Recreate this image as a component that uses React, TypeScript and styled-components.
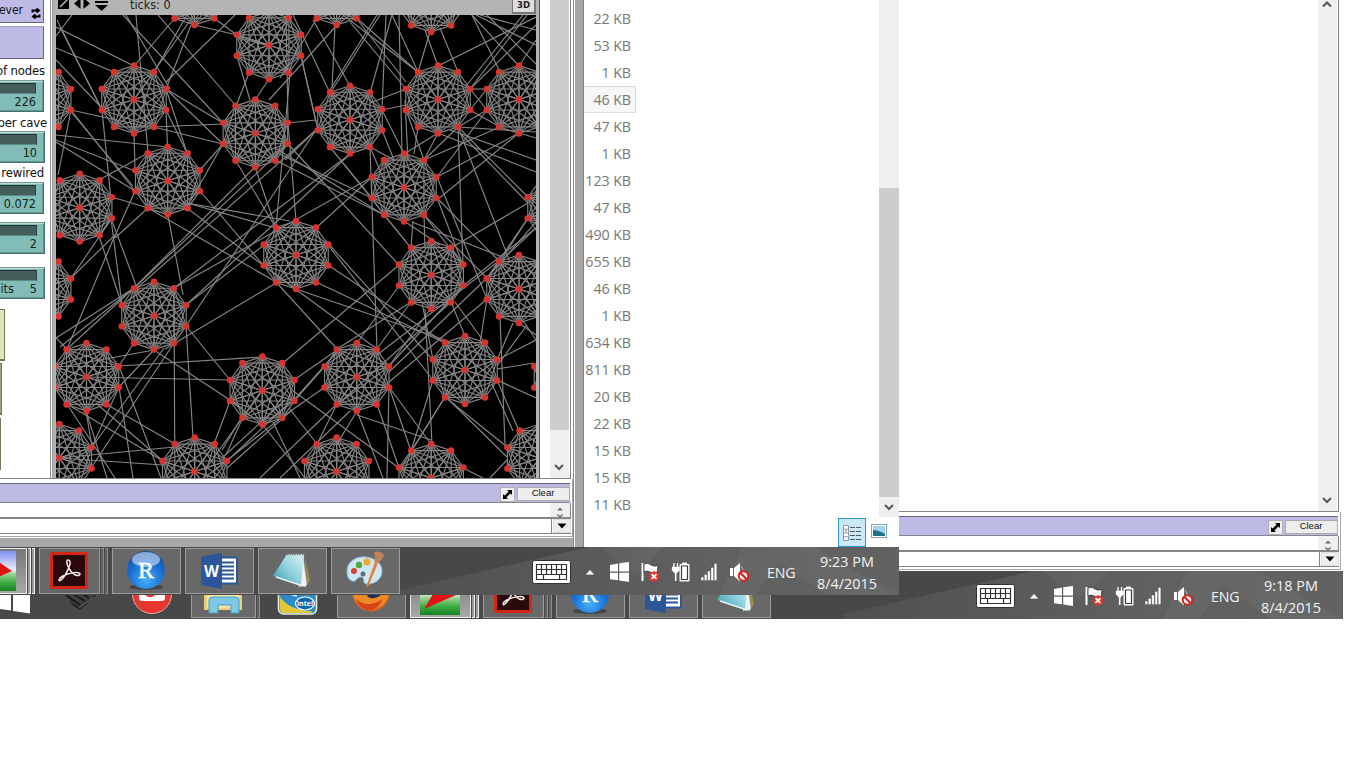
import React from "react";
import styled, { createGlobalStyle, css } from "styled-components";

const GlobalStyle = createGlobalStyle`
  *, *::before, *::after { box-sizing: border-box; }
  body { margin: 0; background: #fff; overflow: hidden; }
`;

const UI = `"Open Sans", "Noto Sans", sans-serif`;
const TAHOMA = `"DejaVu Sans Condensed", "DejaVu Sans", sans-serif`;

/* ---------- screens ---------- */

const Page = styled.main`
  position: relative;
  width: 1360px;
  height: 768px;
  background: #fff;
  overflow: hidden;
`;

const Screen = styled.section<{ $w: number; $h: number; $front?: boolean }>`
  display: flex;
  flex-direction: column;
  width: ${(p) => p.$w}px;
  height: ${(p) => p.$h}px;
  overflow: hidden;
  background: #fff;
  ${(p) =>
    p.$front &&
    css`
      position: absolute;
      left: 0;
      top: 0;
    `}
`;

const Row = styled.div`
  display: flex;
  flex: 1;
  min-height: 0;
`;

/* ---------- model window ---------- */

const ModelWindow = styled.div<{ $w: number }>`
  display: flex;
  flex-direction: column;
  flex: none;
  width: ${(p) => p.$w}px;
  background: #fff;
`;

const WorkArea = styled.div<{ $h: number }>`
  display: flex;
  height: ${(p) => p.$h}px;
  flex: none;
  border-bottom: 1px solid #85858b;
  border-right: 1px solid #85858b;
  margin-right: 2px;
  padding-right: 1px;
`;

const FrameEdge = styled.div`
  display: flex;
  flex: none;
  border-right: 1px solid #a5a5a5;
  flex-direction: column;
`;

const Spacer = styled.div`
  flex: 1;
`;

const Track = styled.div<{ $w: number }>`
  display: flex;
  flex-direction: column;
  flex: none;
  width: ${(p) => p.$w}px;
  background: #efefef;
`;

const Thumb = styled.div<{ $top: number; $h: number }>`
  margin-top: ${(p) => p.$top}px;
  height: ${(p) => p.$h}px;
  background: #cdcdcd;
`;

const ArrowSlot = styled.div<{ $h: number }>`
  display: flex;
  align-items: center;
  justify-content: center;
  height: ${(p) => p.$h}px;
  padding-right: 1px;
`;

const Chevron = ({ up }: { up?: boolean }) => (
  <svg width="10" height="7" viewBox="0 0 10 7">
    <path d={up ? "M1 5.500L5 1.500L9 5.500" : "M1 1L5 5L9 1"} fill="none" stroke="#555" strokeWidth="2" />
  </svg>
);

const CommandHead = styled.div`
  display: flex;
  justify-content: flex-end;
  align-items: flex-start;
  gap: 2px;
  height: 20px;
  margin: 4px 2px 0 0;
  padding-top: 3px;
  border-top: 1px solid #66667a;
  border-bottom: 1px solid #85858b;
  background: #bdbbe6;
`;

const ExpandButton = styled.div`
  display: flex;
  align-items: center;
  justify-content: center;
  width: 15px;
  height: 15px;
  background: #eee;
  border: 1px solid #b0b0b8;
`;

const ClearButton = styled.div`
  width: 53px;
  height: 14px;
  background: #eee;
  border: 1px solid #aaa;
  font: 9.5px/10px "Liberation Sans", sans-serif;
  color: #111;
  text-align: center;
  padding-right: 1px;
`;

const OutputLine = styled.div`
  display: flex;
  justify-content: flex-end;
  margin-right: 1px;
  border-bottom: 2px solid #85858b;
  border-right: 1px solid #85858b;
  height: 16px;
`;

const MiniScroll = styled.div`
  width: 20px;
  background: #efefef;
  overflow: hidden;
  padding: 4px 0 0 6px;
  line-height: 0;
`;

const InputLine = styled.div`
  display: flex;
  height: 15px;
  margin-right: 1px;
  border-bottom: 1px solid #85858b;
`;

const InputField = styled.div`
  flex: 1;
  border-right: 1px solid #85858b;
`;

const DropButton = styled.div`
  display: flex;
  align-items: center;
  justify-content: center;
  width: 18px;
  margin-left: 1px;
  background: #eee;
  border: 1px solid #ddd;
`;

const FootLine = styled.div`
  height: 3px;
  border-bottom: 1px solid #a5a5a5;
`;

const CommandCenter = () => (
  <FrameEdge>
    <CommandHead>
      <ExpandButton>
        <svg width="11" height="11" viewBox="0 0 11 11">
          <path d="M5 1H10V6L8.4 4.4L4.4 8.4L6 10H1V5L2.6 6.6L6.6 2.6Z" />
        </svg>
      </ExpandButton>
      <ClearButton>Clear</ClearButton>
    </CommandHead>
    <OutputLine>
      <MiniScroll>
        <svg width="8" height="12" viewBox="0 0 8 12">
          <path d="M1 3.500L4 0.500L7 3.500ZM0.500 7.500H2.500L4 9L5.500 7.500H7.500L4 11Z" fill="#666" />
        </svg>
      </MiniScroll>
    </OutputLine>
    <InputLine>
      <InputField />
      <DropButton>
        <svg width="10" height="6" viewBox="0 0 10 6">
          <path d="M0.5 0.5H9.5L5 5.5Z" />
        </svg>
      </DropButton>
    </InputLine>
    <FootLine />
  </FrameEdge>
);

/* ---------- controls on the left ---------- */

const Controls = styled.div`
  display: flex;
  flex-direction: column;
  align-items: flex-start;
  width: 54px;
  flex: none;
  overflow: hidden;
  border-right: 1px solid #b0b0b0;
  background: linear-gradient(#888, #888) 50px 0 / 1px 100% no-repeat,
    linear-gradient(#999, #999) 52px 0 / 1px 100% no-repeat, #fff;
`;

const PurpleButton = styled.div<{ $h: number; $mt?: number }>`
  display: flex;
  align-items: center;
  justify-content: flex-end;
  gap: 8px;
  width: 44px;
  height: ${(p) => p.$h}px;
  margin-top: ${(p) => p.$mt || 0}px;
  padding: 0 2px 3px 0;
  background: #bdbbe6;
  border: solid #66667a;
  border-width: 0 1px 1px 0;
  border-top: ${(p) => (p.$mt ? "1px solid #a3a2c0" : "0")};
  font: 12px ${TAHOMA};
  color: #111;
  white-space: nowrap;
`;

const LoopIcon = styled.svg`
  position: relative;
  top: 4px;
  flex: none;
`;

const Caption = styled.div<{ $w: number; $mt: number }>`
  display: flex;
  justify-content: flex-end;
  width: ${(p) => p.$w}px;
  height: 14px;
  margin-top: ${(p) => p.$mt}px;
  font: 11.7px/14px "DejaVu Sans", sans-serif;
  letter-spacing: -0.15px;
  color: #111;
  white-space: nowrap;
`;

const SliderBox = styled.div<{ $mt: number; $w?: number }>`
  width: ${(p) => p.$w || 44}px;
  height: 32px;
  margin-top: ${(p) => p.$mt}px;
  background: #82bcb6;
  border: solid #44716d;
  border-width: 0 1px 1px 0;
  box-shadow: inset 0 1px #7a9a98, inset 0 2px #b9dcd8, inset -1px -1px #63958f;
  padding: 3px 0 0;
`;

const Groove = styled.div`
  width: calc(100% - 7px);
  height: 11px;
  background: #435d5a;
  border-top: 1px solid #1f302e;
  border-right: 1px solid #2c4340;
  border-bottom: 1px solid #5c8b86;
`;

const SliderValue = styled.div`
  display: flex;
  justify-content: flex-end;
  gap: 16px;
  padding-right: 7px;
  margin-top: 1px;
  font: 12.5px/14px ${TAHOMA};
  color: #142421;
  white-space: nowrap;
`;

const Monitor = styled.div<{ $w: number; $mt: number; $c: string }>`
  width: ${(p) => p.$w}px;
  height: 52px;
  margin-top: ${(p) => p.$mt}px;
  background: ${(p) => p.$c};
  border: solid #76765c;
  border-width: 1px 1px 2px 0;
`;

const Slider = ({ mt, w, value, tail }: { mt: number; w?: number; value: string; tail?: string }) => (
  <SliderBox $mt={mt} $w={w}>
    <Groove />
    <SliderValue>
      {tail && <span>{tail}</span>}
      <span>{value}</span>
    </SliderValue>
  </SliderBox>
);

/* ---------- network view ---------- */

const ViewColumn = styled.div`
  display: flex;
  flex-direction: column;
  width: 486px;
  flex: none;
  background: #b4b4b4;
  border-right: 1px solid #555;
`;

const ViewBar = styled.div`
  display: flex;
  height: 15px;
  flex: none;
  padding-left: 4px;
`;

const BarIcons = styled.svg`
  flex: none;
`;

const Ticks = styled.div`
  width: 382px;
  margin-left: 21px;
  margin-top: -3px;
  font: 12.5px/15px ${TAHOMA};
  color: #222;
`;

const ThreeD = styled.div`
  width: 24px;
  height: 14px;
  background: #ddd;
  border: solid #777;
  border-width: 0 2px 2px 1px;
  font: bold 9.5px/10px ${TAHOMA};
  text-align: center;
  color: #222;
`;

const Network = styled.svg`
  display: block;
  margin-left: 2px;
  background: #000;
`;

const caves: [number, number][] = [
  [134, 99.5], [255.4, 133.3], [269, 45.3], [167.7, 180.7], [79.7, 207.7], [38.7, 99.5],
  [194.5, -9], [350, 119.7], [438, 99.5], [519, 99.5], [404, 187.5], [336.7, -9], [431.2, -2],
  [560, 207.8], [296, 255], [431.2, 275], [519, 289], [154, 315.7], [86.5, 377], [262.3, 390.5],
  [38.7, 289], [59.3, 458], [194.7, 471.5], [336.7, 471.5], [356.8, 377], [465, 370],
  [431.2, 478], [539.6, 458], [566.5, 377],
];

const links: number[][] = [
  [56, 27, 134, 66], [56, 48, 114, 72], [72, 15, 56, 36], [57, 20, 102, 110], [60, 27, 102, 110],
  [56, 60, 100, 106], [123, 15, 223, 123], [126, 15, 170, 89], [136, 15, 148, 153], [158, 15, 236, 106],
  [175, 18, 134, 66], [194, 15, 153.5, 72], [187, 15, 154, 72], [191, 25, 166, 89], [194.7, 25, 237, 35],
  [237, 35, 269, 45], [237, 37, 269, 46], [214.5, 18.5, 237, 35], [166, 89, 223, 123], [166, 89, 223, 144],
  [166, 110, 167.5, 147], [153.5, 127, 223, 124], [153.5, 127, 223, 144], [166, 110, 187, 153],
  [166, 89, 187, 153], [134, 133, 135, 170], [235, 15, 166, 82], [237, 56, 250, 100], [249, 73, 236, 106],
  [269, 79, 255, 100], [71, 110, 148, 127], [71, 110, 135, 191], [72, 113, 133, 186], [71, 110, 58, 175],
  [56, 135, 168, 147], [56, 140, 135, 171], [56, 142, 135, 191], [102, 110, 111, 200], [99, 180, 148, 153],
  [112, 197, 148, 208], [114, 238, 135, 191], [115, 238, 148, 208], [200, 191, 264, 266],
  [187, 203, 276, 228], [187, 203, 290, 221], [167.7, 214, 183, 295], [187, 208, 264, 266],
  [148, 208, 276, 282], [223, 144, 187, 207], [223, 144, 200, 170], [236, 161, 276, 228],
  [255, 167, 276, 228], [255, 167, 134, 288], [288, 144, 134, 288], [290, 73, 276, 228],
  [286, 15, 288, 123], [316, 130, 186, 326], [316, 130, 137, 288], [350, 154, 174, 288],
  [350, 154, 186, 305], [372, 177, 174, 288], [288, 123, 296, 221],
  [293, 15, 330, 93], [313, 20, 350, 86], [335, 25, 332, 88], [317, 18.5, 280, 78], [337, 25, 269, 100],
  [380, 15, 331, 92], [377, 15, 330, 90], [386, 15, 382, 109], [392, 15, 370, 93], [392, 15, 418, 72],
  [399, 15, 402, 154], [343, 15, 418, 72], [357, 18.5, 418, 72], [350, 22, 406, 89], [356, 18, 406, 82],
  [430, 32, 418, 72], [425, 30, 438, 66], [440, 28, 458, 72], [536, 17, 438, 66], [527, 15, 470, 89],
  [523, 15, 466, 86], [536, 25, 470, 89], [472, 15, 519, 66], [476, 15, 536, 45], [487, 15, 536, 64],
  [472, 15, 500, 72], [480, 15, 536, 30], [536, 40, 519, 66], [382, 110, 406, 105], [370, 103, 406, 89],
  [382, 110, 404, 154], [382, 130, 394, 160], [301, 56, 316, 122], [301, 56, 318, 130],
  [288, 123, 316, 120], [285, 160, 316, 130], [275, 148, 384, 215], [275, 152, 372, 198],
  [275, 160, 384, 215], [288, 144, 399, 265], [330, 147, 372, 198], [330, 147, 411, 248],
  [370, 147, 373, 235], [370, 147, 394, 160], [370, 147, 384, 180], [316, 228, 372, 177],
  [418, 127, 414, 154], [405, 100, 408, 160], [406, 110, 424, 160], [438, 133, 424, 160],
  [438, 133, 404, 154], [458, 127, 424, 160], [458, 127, 536, 132], [458, 127, 463, 265],
  [458, 127, 528, 197], [460, 133, 528, 203], [438, 133, 536, 172], [450, 130, 536, 160],
  [487, 110, 437, 177], [500, 127, 424, 160], [519, 133, 437, 177], [519, 133, 437, 200],
  [487, 110, 458, 127], [470, 110, 500, 127], [470, 89, 487, 89], [470, 89, 487, 110],
  [470, 110, 487, 89], [519, 133, 536, 138], [458, 127, 510, 262], [437, 177, 487, 299],
  [437, 198, 463, 265], [424, 215, 487, 278], [424, 215, 463, 265], [437, 198, 500, 262],
  [528, 203, 451, 248], [528, 218, 487, 278], [528, 218, 500, 262], [404, 221, 440, 245],
  [413, 221, 411, 248], [424, 215, 425, 248], [412, 222, 500, 256], [384, 215, 411, 248],
  [111, 218, 99, 236], [99, 236, 122, 305], [111, 218, 122, 305], [111, 218, 137, 288],
  [115, 235, 71, 278], [112, 218, 71, 278], [115, 235, 67, 349], [264, 245, 186, 305],
  [276, 283, 165, 349], [134, 288, 56, 338], [134, 288, 60, 347], [134, 288, 67, 349],
  [56, 338, 67, 349], [174, 288, 174.7, 444], [186, 326, 193, 437], [186, 326, 230, 380],
  [154, 350, 67, 366], [154, 350, 242, 408], [119, 366, 262, 357], [86, 377, 230, 380],
  [119, 366, 134, 343], [119, 387, 154, 350], [174, 343, 91, 468], [164, 348, 92, 447],
  [119, 387, 133, 478], [119, 366, 161, 478], [106, 404, 175, 444], [97, 404, 163, 461],
  [67, 404, 163, 461], [67, 404, 115, 478], [86, 411, 107, 478], [59, 458, 175, 447],
  [59, 458, 163, 465], [119, 387, 92, 447], [86, 411, 92, 447], [230, 401, 214, 444],
  [242, 417, 222, 450], [243, 417, 226, 455], [262, 390, 205, 470], [290, 402, 227, 461],
  [285, 400, 222, 458], [282, 417, 215, 470], [292, 410, 227, 468], [273, 422, 300, 478],
  [262, 424, 305, 478], [328, 245, 433, 380], [326, 241, 433, 360], [328, 265, 445, 343],
  [316, 282, 445, 343], [296, 289, 445, 340], [276, 282, 337, 349], [264, 266, 377, 349],
  [373, 235, 377, 349], [399, 265, 283, 363], [399, 286, 357, 343], [411, 302, 337, 349],
  [411, 302, 377, 349], [431, 308, 389, 366], [451, 302, 337, 405], [463, 286, 389, 366],
  [487, 278, 389, 372], [487, 299, 389, 382], [500, 260, 377, 355], [422, 302, 433, 360],
  [425, 309, 432, 444], [451, 302, 465, 336], [455, 302, 485, 343], [536, 228, 500, 262],
  [536, 222, 487, 278], [536, 228, 463, 286], [500, 316, 505, 445], [513, 323, 497, 360],
  [524, 322, 536, 340], [519, 323, 536, 335], [536, 340, 497, 360], [527, 325, 497, 366],
  [487, 299, 480, 343], [497, 369, 534, 363], [497, 380, 536, 398], [497, 380, 519, 431],
  [492, 384, 513, 431], [445, 397, 507, 447], [449, 400, 507, 457], [445, 397, 411, 451],
  [445, 397, 403, 465], [433, 380, 411, 451], [389, 387, 431, 444], [389, 387, 387, 478],
  [389, 387, 411, 451], [377, 404, 399, 468], [357, 411, 383, 478], [357, 415, 431, 440],
  [337, 404, 317, 444], [357, 411, 337, 444], [337, 404, 260, 478], [350, 411, 280, 478],
  [294, 380, 337, 350], [294, 400, 337, 352], [294, 401, 325, 366], [282, 417, 325, 387],
  [292, 390, 399, 468], [289, 408, 317, 444], [463, 468, 483, 478], [507, 460, 490, 478],
];

const ring = ([cx, cy]: [number, number]) =>
  Array.from({ length: 10 }, (_, i) => {
    const a = (i * Math.PI) / 5;
    return [cx + 33.9 * Math.sin(a), cy - 33.9 * Math.cos(a)];
  });

const NetworkView = () => (
  <Network width="480" height="463" viewBox="56 15 480 463">
    <g stroke="#868686" strokeWidth="1.15">
      {links.map(([a, b, c, d], i) => (
        <line key={i} x1={a} y1={b} x2={c} y2={d} />
      ))}
      {caves.map((c, k) => {
        const pts = [c as number[], ...ring(c)];
        return pts.map((p, i) =>
          pts.slice(i + 1).map((q, j) => (
            <line key={`${k}-${i}-${j}`} x1={p[0]} y1={p[1]} x2={q[0]} y2={q[1]} />
          ))
        );
      })}
    </g>
    <g fill="#d5352e">
      {caves.map((c, k) =>
        [c as number[], ...ring(c)].map((p, i) => <circle key={`${k}-${i}`} cx={p[0]} cy={p[1]} r="3.25" />)
      )}
    </g>
  </Network>
);

/* ---------- file list ---------- */

const Divider = styled.div`
  width: 11px;
  flex: none;
  background: linear-gradient(90deg, #888 0 1px, #fff 1px 2px, #a6a6a6 2px 10px, #858585 10px);
`;

const Explorer = styled.div`
  display: flex;
  flex-direction: column;
  width: 315px;
  flex: none;
  background: #fff;
`;

const ListRow = styled.div`
  display: flex;
  justify-content: space-between;
  height: 517px;
  flex: none;
`;

const Sizes = styled.div`
  padding-top: 5px;
  width: 52px;
`;

const Size = styled.div<{ $on?: boolean }>`
  height: 27px;
  padding-right: 5px;
  text-align: right;
  font: 14.3px/28px ${UI};
  letter-spacing: -0.1px;
  color: #777;
  white-space: nowrap;
  box-shadow: ${(p) => (p.$on ? "inset -1px 0 #dcdcdc, inset 0 1px #dcdcdc, inset 0 -1px #dcdcdc" : "none")};
  background: ${(p) => (p.$on ? "#f7f7f7" : "transparent")};
`;

const ViewModes = styled.div`
  display: flex;
  align-items: center;
  gap: 5px;
  height: 30px;
  padding: 1px 0 0 254px;
`;

const ModeOn = styled.div`
  display: flex;
  align-items: center;
  justify-content: center;
  width: 28px;
  height: 29px;
  background: #cbe8f8;
  border: 1px solid #2f98cf;
`;

const PictureMode = styled.svg`
  margin-bottom: 3px;
`;

const sizes = [
  "22 KB", "53 KB", "1 KB", "46 KB", "47 KB", "1 KB", "123 KB", "47 KB", "490 KB", "655 KB",
  "46 KB", "1 KB", "634 KB", "811 KB", "20 KB", "22 KB", "15 KB", "15 KB", "11 KB",
];

/* ---------- taskbar ---------- */

const Taskbar = styled.div`
  position: relative;
  display: flex;
  justify-content: space-between;
  height: 48px;
  flex: none;
  overflow: hidden;
  background: #484848;
  &::before {
    content: "";
    position: absolute;
    right: 0;
    top: 0;
    width: 500px;
    height: 48px;
    background: linear-gradient(90deg, #505050, #606060 60%, #626262);
    clip-path: polygon(0 90%, 38% 0, 100% 0, 100% 100%, 0 100%);
  }
  &::after {
    content: "";
    position: absolute;
    right: 0;
    top: 0;
    width: 300px;
    height: 48px;
    background: rgba(255, 255, 255, 0.04);
    clip-path: polygon(0 0, 12% 60%, 22% 0, 48% 0, 40% 100%, 52% 100%, 60% 30%, 76% 100%, 100% 100%, 88% 60%, 72% 0);
  }
`;

const Tasks = styled.div<{ $shift: number }>`
  position: relative;
  display: flex;
  gap: 4px;
  margin-left: ${(p) => p.$shift}px;
  padding-top: 1px;
`;

const TaskSlot = styled.div<{ $w?: number }>`
  display: flex;
  width: ${(p) => p.$w || 69}px;
  height: 46px;
  flex: none;
`;

const TaskFace = styled.div<{ $plain?: boolean; $active?: boolean }>`
  display: flex;
  align-items: center;
  justify-content: center;
  flex: 1;
  min-width: 0;
  padding-right: 2px;
  border: 1px solid ${(p) => (p.$plain ? "transparent" : p.$active ? "#eee" : "#9c9c9c")};
  background: ${(p) =>
    p.$plain ? "transparent" : p.$active ? "linear-gradient(#777, #a8a8a8)" : "#686868"};
  svg {
    flex: none;
  }
`;

const Leaf = styled.div<{ $active?: boolean }>`
  width: 3px;
  margin-left: 1px;
  border: solid ${(p) => (p.$active ? "#eee" : "#8c8c8c")};
  border-width: 1px 1px 1px 0;
  background: ${(p) => (p.$active ? "#999" : "#626262")};
`;

type IconName = "start" | "scan" | "red" | "folder" | "intel" | "fox" | "turtle" | "pdf" | "r" | "word" | "note" | "paint";

const TaskIcon = ({ name, id }: { name: IconName; id: string }) => {
  switch (name) {
    case "start":
      return (
        <svg width="42" height="42" viewBox="0 0 42 42">
          <path d="M-6 5L12 3V19H-6ZM14 2.6L31 0V19H14ZM-6 21H12V36.500L-6 34ZM14 21H31V39.500L14 37Z" fill="#fff" />
        </svg>
      );
    case "scan":
      return (
        <svg width="42" height="42" viewBox="0 0 42 42">
          <path d="M3 12L30 8L38 22L22 36L14 31Z" fill="#222" />
          <path d="M5 20L34 17L36 22L21 33L13 28Z" fill="#3f3f3f" />
          <path d="M8 21L22 31M15 20L27 27M23 19L31 24" stroke="#1a1a1a" strokeWidth="2" />
          <path d="M21 34L36 23" stroke="#777" />
        </svg>
      );
    case "red":
      return (
        <svg width="42" height="42" viewBox="0 0 42 42">
          <circle cx="21" cy="20" r="19.500" fill="#e5362f" stroke="#eab0a8" />
          <rect x="8" y="6" width="26" height="21" rx="3" fill="#fff" />
          <path d="M15 20Q20 25 25 18" stroke="#e5362f" strokeWidth="2.5" fill="none" />
        </svg>
      );
    case "folder":
      return (
        <svg width="42" height="42" viewBox="0 0 42 42">
          <path d="M2 5H16L19 9H40V36H2Z" fill="#e9cf7c" />
          <path d="M5 12H37V34H5Z" fill="#f6e6a6" />
          <path d="M7 39V26Q7 23 11 23H33Q37 23 37 26V39H29V31H16V39Z" fill="#7cc8e6" stroke="#4a9dc6" />
        </svg>
      );
    case "intel":
      return (
        <svg width="42" height="42" viewBox="0 0 42 42">
          <rect x="1.5" y="2" width="38" height="38" rx="5" fill="#2a8cc8" stroke="#e9e9d8" strokeWidth="1.600" />
          <path d="M6 5H19V22L6 18ZM21 5H35V20H21Z" fill="#2f9ad8" stroke="#d9f0fb" strokeWidth="1.500" />
          <path d="M3 23Q12 36 36 37.500L34 39H6Q3 38 3 35Z" fill="#e3c83c" />
          <ellipse cx="28" cy="29.500" rx="9.5" ry="6.5" fill="#0b67aa" stroke="#fff" strokeWidth="1.2" />
          <text x="28" y="32" fontSize="7" fontWeight="bold" fontFamily="Open Sans, sans-serif" fill="#fff" textAnchor="middle">intel</text>
        </svg>
      );
    case "fox":
      return (
        <svg width="42" height="42" viewBox="0 0 42 42">
          <circle cx="21" cy="19" r="18.500" fill="#e0641d" />
          <circle cx="22" cy="13" r="12" fill="#1c2f5c" />
          <path d="M3 14Q8 18 14 17Q20 20 17 22Q22 27 31 21Q36 17 36 8Q42 22 33 31Q21 39 9 30Q2 25 3 14Z" fill="#ee8a24" />
          <path d="M6 25Q17 35 33 25Q27 38 16 36Q9 33 6 25Z" fill="#d8441a" />
        </svg>
      );
    case "turtle":
      return (
        <svg width="40" height="40" viewBox="0 0 40 40">
          <defs>
            <linearGradient id={id} x1="0" y1="0" x2="0" y2="1">
              <stop offset="0" stopColor="#7f8ef0" />
              <stop offset="0.48" stopColor="#eef3fb" />
              <stop offset="0.55" stopColor="#a4d99e" />
              <stop offset="0.78" stopColor="#3fae45" />
              <stop offset="1" stopColor="#16801f" />
            </linearGradient>
          </defs>
          <rect width="40" height="40" fill={`url(#${id})`} />
          <path d="M4 34L13 19L8 1L36 20Z" fill="#e01414" />
        </svg>
      );
    case "pdf":
      return (
        <svg width="40" height="40" viewBox="0 0 40 40">
          <rect x="2.500" y="2.500" width="35" height="34" rx="1" fill="#2a0a08" stroke="#d42614" strokeWidth="3" />
          <path d="M19 9C16 9 19 18 23.500 22C27 25.500 31 25 31 23C31 20.500 21 21 13 25.500C9 28 9.500 31 12 29C16 26 22 14 21 10.500C20.700 9.300 20 9 19 9Z" fill="none" stroke="#f5eeee" strokeWidth="1.500" />
        </svg>
      );
    case "r":
      return (
        <svg width="40" height="40" viewBox="0 0 40 40">
          <defs>
            <radialGradient id={id} cx="0.5" cy="0.75" r="0.8">
              <stop offset="0" stopColor="#45b2fa" />
              <stop offset="0.55" stopColor="#1b6fd4" />
              <stop offset="1" stopColor="#17499e" />
            </radialGradient>
          </defs>
          <ellipse cx="20" cy="36" rx="17" ry="3" fill="#454545" />
          <circle cx="20" cy="19" r="19" fill={`url(#${id})`} />
          <ellipse cx="20" cy="8.500" rx="14" ry="7.500" fill="#fff" opacity="0.5" />
          <text x="20" y="26.500" fontSize="24" fontFamily="Liberation Serif, serif" fill="#fff" textAnchor="middle" stroke="#fff" strokeWidth="0.5">R</text>
        </svg>
      );
    case "word":
      return (
        <svg width="40" height="40" viewBox="0 0 40 40">
          <rect x="19" y="6.500" width="19" height="26" rx="1" fill="#fff" stroke="#2b579a" strokeWidth="2" />
          <path d="M23 11.500H35M23 15.500H35M23 19.500H35M23 23.500H35M23 27.500H35" stroke="#2b579a" strokeWidth="2" />
          <path d="M2 5.500L23 2V38L2 34Z" fill="#2b579a" />
          <text x="12.500" y="25.500" fontSize="16" fontWeight="bold" fontFamily="Open Sans, sans-serif" fill="#fff" textAnchor="middle" textLength="15" lengthAdjust="spacingAndGlyphs">W</text>
        </svg>
      );
    case "note":
      return (
        <svg width="42" height="42" viewBox="0 0 42 42">
          <defs>
            <linearGradient id={id} x1="0" y1="1" x2="1" y2="0">
              <stop offset="0" stopColor="#3498ad" />
              <stop offset="0.5" stopColor="#8fd2dd" />
              <stop offset="1" stopColor="#dff3f5" />
            </linearGradient>
          </defs>
          <path d="M34 6L39 31L36 34Z" fill="#a88a3c" />
          <path d="M32 5L36 35L28 37Z" fill="#eef3f4" stroke="#a5b5b5" strokeWidth="0.6" />
          <path d="M16 4H33L30 35L2 26Z" fill={`url(#${id})`} />
          <path d="M5 27L29 35L35 36" stroke="#eaf6f7" strokeWidth="1.5" fill="none" />
          <path d="M16 4H34" stroke="#777" strokeWidth="2.500" strokeDasharray="1.5 1" />
        </svg>
      );
    default:
      return (
        <svg width="42" height="42" viewBox="0 0 42 42">
          <path d="M3 21C3 11 13 6 22 7C32 8 38 14 38 21C38 30 30 34 24 34C17 35 22 27 17 27C12 27 12 33 8 31C4 29 3 26 3 21Z" fill="#cfe6f5" stroke="#8cb9d6" />
          <circle cx="10" cy="21" r="3" fill="#d8432f" />
          <circle cx="15" cy="15" r="3.200" fill="#56a83c" />
          <circle cx="23" cy="12" r="3.500" fill="#f0ab2c" />
          <circle cx="19" cy="24" r="2.500" fill="#5c6d78" />
          <path d="M31 12L34 13L24 37L22 37Z" fill="#e28132" />
          <path d="M30 2Q36 0 40 5Q39 9 34 13L30 12Q32 7 30 2Z" fill="#bd8459" />
        </svg>
      );
  }
};

interface Task {
  icon: IconName;
  plain?: boolean;
  active?: boolean;
  leaves?: number;
  w?: number;
}

const recent: Task[] = [
  { icon: "turtle", active: true, leaves: 2 },
  { icon: "pdf", leaves: 2 },
  { icon: "r" },
  { icon: "word" },
  { icon: "note" },
];

const frontTasks: Task[] = [...recent, { icon: "paint" }];
const backTasks: Task[] = [
  { icon: "start", plain: true, w: 41 },
  { icon: "scan", plain: true },
  { icon: "red", plain: true },
  { icon: "folder", leaves: 1 },
  { icon: "intel", plain: true },
  { icon: "fox" },
  ...recent,
];

const Tray = styled.div`
  position: relative;
  z-index: 1;
  display: flex;
  align-items: center;
  width: 367px;
`;

const TrayIcons = styled.svg`
  flex: none;
`;

const Language = styled.div`
  width: 30px;
  margin-left: 17px;
  margin-top: 3px;
  font: 14.2px/18px ${UI};
  letter-spacing: -0.2px;
  color: #f2f2f2;
`;

const Clock = styled.div`
  width: 100px;
  margin-top: 4px;
  text-align: center;
  font: 14.4px/22px ${UI};
  color: #f4f4f4;
  white-space: nowrap;
`;

const TrayArea = ({ time }: { time: string }) => (
  <Tray>
    <TrayIcons width="218" height="48" viewBox="0 0 218 48">
      <rect x="0.500" y="13.500" width="38" height="23" rx="2" fill="#fff" stroke="#333" />
      <path d="M4.500 17.500H34.500V32.500H4.500ZM4.500 22.500H34.500M4.500 27.500H34.500M9.500 17.500V27.500M14.500 17.500V27.500M19.500 17.500V27.500M24.500 17.500V27.500M29.500 17.500V27.500M11.500 27.500V32.500M27.500 27.500V32.500" fill="none" stroke="#333" strokeWidth="1.200" />
      <path d="M53 28L58 22.500L63 28Z" fill="#f4f4f8" stroke="#3c3c3c" strokeWidth="0.600" />
      <path d="M78 18L86 16.500V24.500H78ZM87.200 16.300L97 15V24.500H87.200ZM78 25.800H86V33.200L78 32.200ZM87.200 25.800H97V35L87.200 33.500Z" fill="#fff" />
      <path d="M110.500 16V34" stroke="#fff" strokeWidth="2" />
      <path d="M112 17Q116 15 119 18Q122 20 126 18.500L125 26Q121 27 118 25Q115 23 112 25Z" fill="#fff" stroke="#333" strokeWidth="0.800" />
      <circle cx="122" cy="29.500" r="5.200" fill="#da382e" />
      <path d="M119.600 27.100L124.400 31.900M124.400 27.100L119.600 31.900" stroke="#fff" strokeWidth="1.700" />
      <path d="M148 17.500H150.500V16H154.500V17.500H157V34H148Z" fill="#fff" stroke="#fff" />
      <path d="M149.500 19H155.500V32.500H149.500Z" fill="#fff" stroke="#3a3a3a" strokeWidth="1.200" />
      <path d="M142 16V20M145.500 16V20M140.500 20.500H147V23L144.500 25.500H143L140.500 23Z" fill="#fff" stroke="#fff" strokeWidth="1.300" />
      <path d="M143.700 25V34" stroke="#fff" strokeWidth="1.600" />
      <path d="M169 30H171.700V33.500H169ZM172.300 27.500H175V33.500H172.300ZM175.600 24H178.300V33.500H175.600ZM179 20.500H181.600V33.500H179ZM182.200 16.500H184.800V33.500H182.200Z" fill="#fff" stroke="#333" strokeWidth="0.300" />
      <path d="M198 21H201V29H198Z" fill="#fff" />
      <path d="M202 21L208 16V34.500L202 29Z" fill="#fff" />
      <path d="M209 19Q213 24 210 29" fill="none" stroke="#bbb" />
      <circle cx="211.500" cy="29" r="4.800" fill="#eee" stroke="#d3221c" strokeWidth="2" />
      <path d="M208.200 25.700L214.800 32.300" stroke="#d3221c" strokeWidth="2" />
    </TrayIcons>
    <Language>ENG</Language>
    <Clock>
      {time}
      <br />
      8/4/2015
    </Clock>
  </Tray>
);

const Strip = ({ tasks, shift, time, id }: { tasks: Task[]; shift: number; time: string; id: string }) => (
  <Taskbar>
    <Tasks $shift={shift}>
      {tasks.map((t) => (
        <TaskSlot key={t.icon} $w={t.w}>
          <TaskFace $plain={t.plain} $active={t.active}>
            <TaskIcon name={t.icon} id={`${id}-${t.icon}`} />
          </TaskFace>
          {Array.from({ length: t.leaves || 0 }, (_, i) => (
            <Leaf key={i} $active={t.active} />
          ))}
        </TaskSlot>
      ))}
    </Tasks>
    <TrayArea time={time} />
  </Taskbar>
);

const FrameGap = styled.div`
  height: 10px;
  margin-top: 1px;
  background: #a8a8a8;
`;

export default function App() {
  return (
    <Page>
      <GlobalStyle />
      <Screen $w={1343} $h={619}>
        <Row>
          <ModelWindow $w={1341}>
            <WorkArea $h={512}>
              <Spacer />
              <Track $w={19}>
                <ArrowSlot $h={9}>
                  <Chevron up />
                </ArrowSlot>
                <Spacer />
                <ArrowSlot $h={22}>
                  <Chevron />
                </ArrowSlot>
              </Track>
            </WorkArea>
            <CommandCenter />
          </ModelWindow>
        </Row>
        <Strip tasks={backTasks} shift={0} time="9:18 PM" id="b" />
      </Screen>

      <Screen $w={899} $h={595} $front>
        <Row>
          <ModelWindow $w={573}>
            <WorkArea $h={479}>
              <Controls>
                <PurpleButton $h={23}>
                  <span>ever</span>
                  <LoopIcon width="10" height="11" viewBox="0 0 10 11">
                    <path d="M1.500 4.500V2.500H7.500M5.500 0.500L8 2.500L5.500 4.500M8.500 6.500V8.500H2.500M4.500 6.500L2 8.500L4.500 10.500" fill="none" stroke="#000" strokeWidth="1.900" />
                  </LoopIcon>
                </PurpleButton>
                <PurpleButton $h={33} $mt={3} />
                <Caption $w={45} $mt={5}>of nodes</Caption>
                <Slider mt={2} value="226" />
                <Caption $w={47} $mt={4}>per cave</Caption>
                <Slider mt={1} w={45} value="10" />
                <Caption $w={44} $mt={3}>rewired</Caption>
                <Slider mt={2} value="0.072" />
                <Slider mt={8} w={45} value="2" />
                <Slider mt={13} w={45} value="5" tail="its" />
                <Monitor $w={5} $mt={10} $c="#e4e4bc" />
                <Monitor $w={2} $mt={2} $c="#a0a080" />
                <Monitor $w={1} $mt={3} $c="#76765c" />
              </Controls>
              <ViewColumn>
                <ViewBar>
                  <BarIcons width="51" height="15" viewBox="58 0 51 15">
                    <path d="M58 -2H69V9H58Z" />
                    <path d="M60 7L68 -1" stroke="#b4b4b4" strokeWidth="1.500" />
                    <path d="M74 3.500L80.500 -2V9ZM90 3.500L83.500 -2V9ZM95 3H108V1H95ZM95 5H108L101.500 11Z" />
                  </BarIcons>
                  <Ticks>ticks: 0</Ticks>
                  <ThreeD>3D</ThreeD>
                </ViewBar>
                <NetworkView />
              </ViewColumn>
              <Spacer />
              <Track $w={19}>
                <Thumb $top={0} $h={430} />
                <Spacer />
                <ArrowSlot $h={22}>
                  <Chevron />
                </ArrowSlot>
              </Track>
            </WorkArea>
            <CommandCenter />
            <FrameGap />
          </ModelWindow>
          <Divider />
          <Explorer>
            <ListRow>
              <Sizes>
                {sizes.map((s, i) => (
                  <Size key={i} $on={i === 3}>
                    {s}
                  </Size>
                ))}
              </Sizes>
              <Track $w={20}>
                <Thumb $top={188} $h={309} />
                <Spacer />
                <ArrowSlot $h={20}>
                  <Chevron />
                </ArrowSlot>
              </Track>
            </ListRow>
            <ViewModes>
              <ModeOn>
                <svg width="20" height="18" viewBox="0 0 20 18">
                  <path d="M1.500 1.500H6.500V16.500H1.500ZM1.500 5.200H6.500M1.500 9H6.500M1.500 12.800H6.500" fill="#fff" stroke="#8a9aa0" />
                  <path d="M8 3.500H19M8 7.500H19M8 11.500H19M8 15.500H19" stroke="#4b5c66" strokeDasharray="5 1" />
                  <path d="M3 7H5" stroke="#d33" />
                </svg>
              </ModeOn>
              <PictureMode width="16" height="14" viewBox="0 0 16 14">
                <rect x="0.500" y="0.500" width="15" height="13" fill="#fff" stroke="#86a6b8" />
                <rect x="2" y="2" width="12" height="10" fill="#9fd6ee" />
                <path d="M2 6Q7 6 14 10V12H2Z" fill="#1f6f8c" />
              </PictureMode>
            </ViewModes>
          </Explorer>
        </Row>
        <Strip tasks={frontTasks} shift={-34} time="9:23 PM" id="f" />
      </Screen>
    </Page>
  );
}
